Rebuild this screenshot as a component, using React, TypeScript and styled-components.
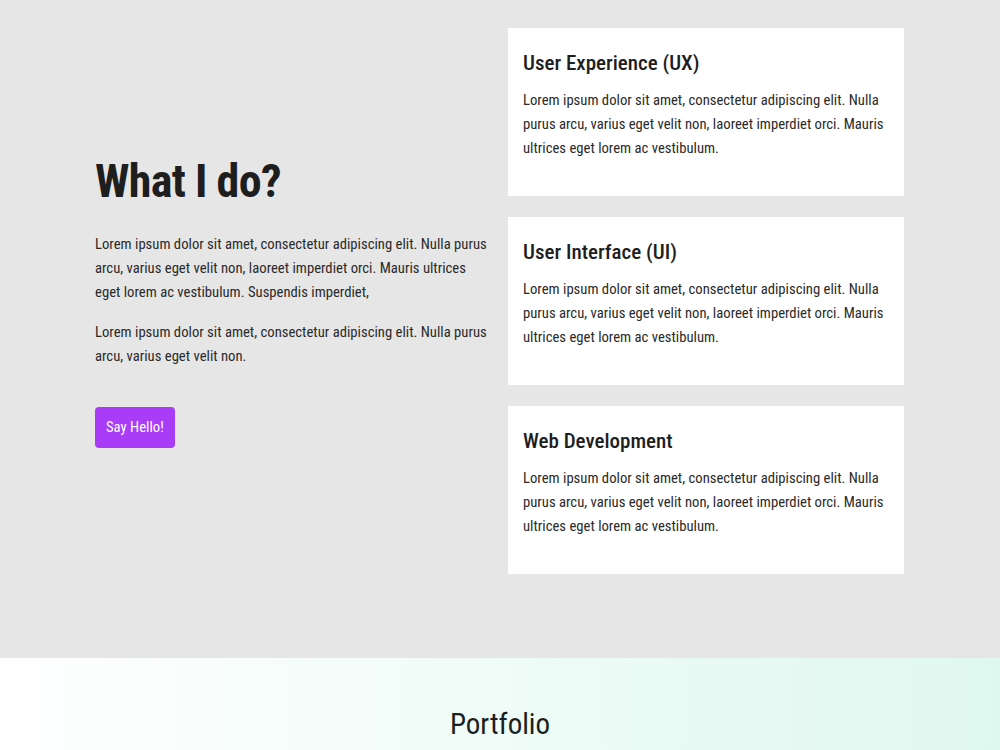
import styled, { createGlobalStyle } from 'styled-components'

const GlobalStyle = createGlobalStyle`
	html, body {
		margin: 0;
		padding: 0;
	}
	body {
		font-family: 'Roboto Condensed', 'DejaVu Sans Condensed', sans-serif;
		color: #222;
		background: #fff;
	}
`

const services = [
	{
		title: 'User Experience (UX)',
		text: 'Lorem ipsum dolor sit amet, consectetur adipiscing elit. Nulla purus arcu, varius eget velit non, laoreet imperdiet orci. Mauris ultrices eget lorem ac vestibulum.',
	},
	{
		title: 'User Interface (UI)',
		text: 'Lorem ipsum dolor sit amet, consectetur adipiscing elit. Nulla purus arcu, varius eget velit non, laoreet imperdiet orci. Mauris ultrices eget lorem ac vestibulum.',
	},
	{
		title: 'Web Development',
		text: 'Lorem ipsum dolor sit amet, consectetur adipiscing elit. Nulla purus arcu, varius eget velit non, laoreet imperdiet orci. Mauris ultrices eget lorem ac vestibulum.',
	},
]

const App = () => {
	return (
		<>
			<GlobalStyle />
			<Services>
				<Container>
					<Intro>
						<Heading>What I do?</Heading>
						<Text>
							Lorem ipsum dolor sit amet, consectetur adipiscing elit. Nulla purus arcu, varius eget
							velit non, laoreet imperdiet orci. Mauris ultrices eget lorem ac vestibulum. Suspendis
							imperdiet,
						</Text>
						<Text>
							Lorem ipsum dolor sit amet, consectetur adipiscing elit. Nulla purus arcu, varius eget
							velit non.
						</Text>
						<Button type='button'>Say Hello!</Button>
					</Intro>
					<Cards>
						{services.map(s => (
							<Card key={s.title}>
								<CardTitle>{s.title}</CardTitle>
								<CardText>{s.text}</CardText>
							</Card>
						))}
					</Cards>
				</Container>
			</Services>
			<Portfolio>
				<SectionTitle>Portfolio</SectionTitle>
			</Portfolio>
		</>
	)
}

export default App

const Services = styled.section`
	background: #e6e6e6;
	padding: 28px 0 84px;
`

const Container = styled.div`
	width: 810px;
	margin: 0 auto;
	display: grid;
	grid-template-columns: 395px 396px;
	column-gap: 18px;
	align-items: center;
`

const Intro = styled.div`
	display: flex;
	flex-direction: column;
	align-items: flex-start;
`

const Heading = styled.h1`
	margin: 0 0 22px;
	font-size: 46px;
	font-weight: 700;
	letter-spacing: -0.7px;
	line-height: 1.2;
	color: #1e1e1e;
`

const Text = styled.p`
	margin: 0 0 16px;
	font-size: 14.7px;
	line-height: 24px;
	color: #2a2a2a;
`

const Button = styled.button`
	margin-top: 23px;
	padding: 0 11px;
	height: 41px;
	background: #a83cf7;
	color: #fff;
	border: none;
	border-radius: 4px;
	font-family: inherit;
	font-size: 14.7px;
	cursor: pointer;
`

const Cards = styled.div`
	display: flex;
	flex-direction: column;
	gap: 21px;
`

const Card = styled.div`
	background: #fff;
	height: 168px;
	box-sizing: border-box;
	padding: 22px 15px 0;
`

const CardTitle = styled.h3`
	margin: 0 0 12px;
	font-size: 21px;
	font-weight: 500;
	line-height: 26px;
	color: #1e1e1e;
`

const CardText = styled.p`
	margin: 0;
	font-size: 14.7px;
	line-height: 24px;
	color: #2a2a2a;
`

const Portfolio = styled.section`
	background: linear-gradient(90deg, #ffffff 0%, #dff8ef 100%);
	padding: 48px 0 40px;
	text-align: center;
`

const SectionTitle = styled.h2`
	margin: 0;
	font-size: 29px;
	font-weight: 400;
	line-height: 36px;
	color: #1e1e1e;
`
